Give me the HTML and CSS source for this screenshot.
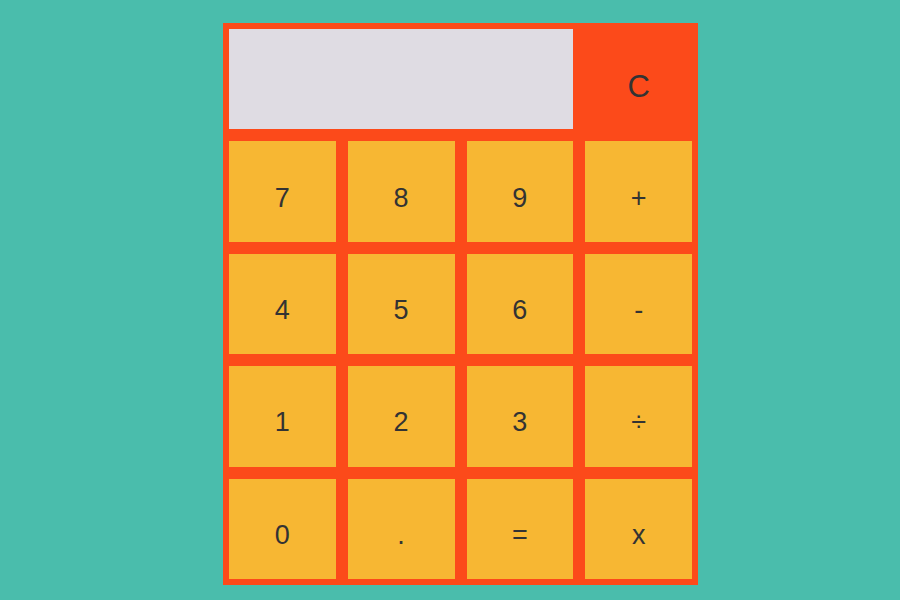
FILE: index.html
```html
<!DOCTYPE html>
<html>
<head>
<meta charset="utf-8">
<link rel="stylesheet" href="styles.css">
</head>
<body>
<div class="page">
  <div class="calc">
    <div class="display"></div>
    <div class="key key-clear">C</div>
    <div class="key">7</div>
    <div class="key">8</div>
    <div class="key">9</div>
    <div class="key">+</div>
    <div class="key">4</div>
    <div class="key">5</div>
    <div class="key">6</div>
    <div class="key">-</div>
    <div class="key">1</div>
    <div class="key">2</div>
    <div class="key">3</div>
    <div class="key">÷</div>
    <div class="key">0</div>
    <div class="key">.</div>
    <div class="key">=</div>
    <div class="key">x</div>
  </div>
</div>
</body>
</html>
```
FILE: styles.css
```css
html, body {
  margin: 0;
  padding: 0;
  height: 100%;
}
body {
  background: #4ABDAC;
  font-family: "Liberation Sans", Arial, sans-serif;
}
.page {
  padding-top: 23px;
  padding-left: 21px;
  display: flex;
  justify-content: center;
}
.calc {
  width: 475px;
  height: 562px;
  box-sizing: border-box;
  padding: 6px;
  background: #FC4A1A;
  display: grid;
  grid-template-columns: repeat(4, 1fr);
  grid-template-rows: repeat(5, 1fr);
  column-gap: 12px;
  row-gap: 12px;
}
.display {
  grid-column: 1 / span 3;
  background: #DFDCE3;
}
.key {
  background: #F7B733;
  color: #333;
  font-size: 27px;
  display: flex;
  align-items: center;
  justify-content: center;
  padding-top: 13px;
  box-sizing: border-box;
}
.key-clear {
  background: #FC4A1A;
  font-size: 31px;
  padding-top: 15px;
}
```
